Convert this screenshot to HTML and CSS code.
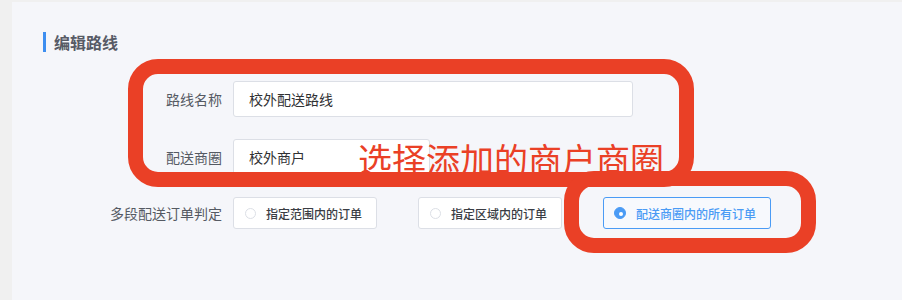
FILE: index.html
```html
<!DOCTYPE html>
<html lang="zh-CN">
<head>
<meta charset="utf-8">
<link rel="stylesheet" href="styles.css">
</head>
<body>
<div class="page">
  <div class="panel">
    <div class="title">编辑路线</div>
    <div class="form">
      <div class="row">
        <div class="label">路线名称</div>
        <div class="input wide">校外配送路线</div>
      </div>
      <div class="row">
        <div class="label">配送商圈</div>
        <div class="input narrow">校外商户</div>
      </div>
      <div class="row">
        <div class="label">多段配送订单判定</div>
        <div class="radios">
          <div class="radio"><span class="dot"></span><span class="rtext">指定范围内的订单</span></div>
          <div class="radio"><span class="dot"></span><span class="rtext">指定区域内的订单</span></div>
          <div class="radio checked"><span class="dot"></span><span class="rtext">配送商圈内的所有订单</span></div>
        </div>
      </div>
    </div>
    <div class="mark mark-one"></div>
    <div class="mark mark-two"></div>
    <div class="note">选择添加的商户商圈</div>
  </div>
</div>
</body>
</html>
```
FILE: styles.css
```css
html, body {
  margin: 0;
  padding: 0;
}
body {
  background: #f0f0f0;
  font-family: "Noto Sans CJK SC", "Noto Sans", sans-serif;
  width: 902px;
  height: 300px;
  overflow: hidden;
}
.page {
  padding: 2px 0 0 12px;
  height: 298px;
}
.panel {
  position: relative;
  background: #f5f6fa;
  height: 298px;
  padding: 30px 0 0 31px;
  box-sizing: border-box;
}
.title {
  border-left: 3px solid #3d8ef0;
  padding-left: 8px;
  height: 20px;
  line-height: 20px;
  font-size: 16px;
  font-weight: 600;
  color: #575b66;
}
.form {
  margin-top: 29px;
  display: flex;
  flex-direction: column;
  gap: 22px;
}
.row {
  display: grid;
  grid-template-columns: 179px auto;
  column-gap: 11px;
  align-items: center;
}
.label {
  text-align: right;
  font-size: 14px;
  color: #555a63;
}
.input {
  height: 36px;
  box-sizing: border-box;
  border: 1px solid #dcdfe6;
  border-radius: 3px;
  background: #fff;
  font-size: 14px;
  color: #303133;
  line-height: 34px;
  padding-left: 15px;
}
.wide { width: 400px; }
.narrow { width: 197px; }
.radios {
  display: flex;
  gap: 41px;
}
.radio {
  height: 32px;
  box-sizing: border-box;
  border: 1px solid #dcdfe6;
  border-radius: 3px;
  background: #fff;
  display: flex;
  align-items: center;
  padding: 0 14px 0 11px;
  font-size: 12px;
  font-weight: 500;
  color: #3a3d44;
}
.radio.checked {
  border-color: #4a9bf5;
  color: #4a9bf5;
  background: #f7f9fd;
  padding-left: 10px;
}
.dot {
  width: 9px;
  height: 9px;
  border: 1px solid #dcdfe6;
  border-radius: 50%;
  background: #fff;
  margin-right: 10px;
  position: relative;
}
.checked .dot {
  width: 10px;
  height: 10px;
  border-color: #4a9bf5;
  background: #4a9bf5;
}
.checked .dot::after {
  content: "";
  position: absolute;
  left: 3.5px;
  top: 3.5px;
  width: 4px;
  height: 4px;
  border-radius: 50%;
  background: #fff;
}
.mark {
  position: absolute;
  border: 15px solid #ea4026;
  border-radius: 30px;
  box-sizing: border-box;
}
.mark-one {
  left: 116px;
  top: 57px;
  width: 566px;
  height: 128px;
}
.mark-two {
  left: 552px;
  top: 169px;
  width: 252px;
  height: 82px;
}
.note {
  position: absolute;
  left: 346px;
  top: 137px;
  font-size: 34px;
  line-height: 40px;
  color: #ea4026;
  font-weight: 400;
  white-space: nowrap;
}
```
